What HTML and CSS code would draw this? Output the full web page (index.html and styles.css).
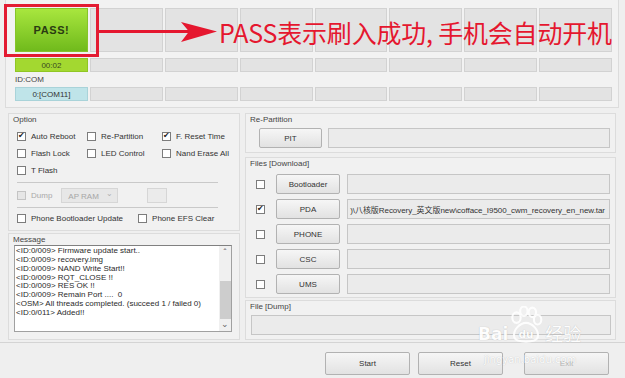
FILE: index.html
```html
<!DOCTYPE html>
<html lang="zh">
<head>
  <meta charset="UTF-8">
  <title>Odin3</title>
  <link rel="stylesheet" href="styles.css">
</head>
<body>
  <div class="window">

    <!-- 端口状态 -->
    <div class="top">
      <div class="slots big">
        <div class="slot pass">PASS!</div>
        <div class="slot"></div><div class="slot"></div><div class="slot"></div>
        <div class="slot"></div><div class="slot"></div><div class="slot"></div><div class="slot"></div>
      </div>
      <div class="slots small time-row">
        <div class="slot time">00:02</div>
        <div class="slot"></div><div class="slot"></div><div class="slot"></div>
        <div class="slot"></div><div class="slot"></div><div class="slot"></div><div class="slot"></div>
      </div>
      <div class="idcom">ID:COM</div>
      <div class="slots small">
        <div class="slot com">0:[COM11]</div>
        <div class="slot"></div><div class="slot"></div><div class="slot"></div>
        <div class="slot"></div><div class="slot"></div><div class="slot"></div><div class="slot"></div>
      </div>
    </div>

    <div class="main">
      <div class="col">
        <!-- Option -->
        <div class="group option">
          <div class="group-title">Option</div>
          <div class="opts">
            <label class="chk"><span class="cb on"></span>Auto Reboot</label>
            <label class="chk"><span class="cb"></span>Re-Partition</label>
            <label class="chk"><span class="cb on"></span>F. Reset Time</label>
            <label class="chk"><span class="cb"></span>Flash Lock</label>
            <label class="chk"><span class="cb"></span>LED Control</label>
            <label class="chk"><span class="cb"></span>Nand Erase All</label>
            <label class="chk"><span class="cb"></span>T Flash</label>
          </div>
          <div class="sep"></div>
          <div class="dump-row">
            <label class="chk off"><span class="cb"></span>Dump</label>
            <div class="select">AP RAM<span class="caret">&#8964;</span></div>
            <div class="mini-box"></div>
          </div>
          <div class="sep"></div>
          <div class="phone-row">
            <label class="chk"><span class="cb"></span>Phone Bootloader Update</label>
            <label class="chk efs"><span class="cb"></span>Phone EFS Clear</label>
          </div>
        </div>

        <!-- Message -->
        <div class="group message">
          <div class="group-title">Message</div>
          <div class="log">
            <div class="log-text">
              <div>&lt;ID:0/009&gt; Firmware update start..</div>
              <div>&lt;ID:0/009&gt; recovery.img</div>
              <div>&lt;ID:0/009&gt; NAND Write Start!!</div>
              <div>&lt;ID:0/009&gt; RQT_CLOSE !!</div>
              <div>&lt;ID:0/009&gt; RES OK !!</div>
              <div>&lt;ID:0/009&gt; Remain Port ....&nbsp; 0</div>
              <div>&lt;OSM&gt; All threads completed. (succeed 1 / failed 0)</div>
              <div>&lt;ID:0/011&gt; Added!!</div>
            </div>
            <div class="scrollbar">
              <span class="arrow">&#710;</span>
              <span class="thumb"></span>
              <span class="arrow down">&#8964;</span>
            </div>
          </div>
        </div>
      </div>

      <div class="col">
        <!-- Re-Partition -->
        <div class="group repart">
          <div class="group-title">Re-Partition</div>
          <div class="pit-row">
            <button class="btn pit">PIT</button>
            <div class="field"></div>
          </div>
        </div>

        <!-- Files -->
        <div class="group files">
          <div class="group-title">Files [Download]</div>
          <div class="file-rows">
            <div class="file-row"><span class="cb"></span><button class="btn file-btn">Bootloader</button><div class="field"></div></div>
            <div class="file-row"><span class="cb on"></span><button class="btn file-btn">PDA</button><div class="field path"><span>)\八核版Recovery_英文版new\cofface_I9500_cwm_recovery_en_new.tar</span></div></div>
            <div class="file-row"><span class="cb"></span><button class="btn file-btn">PHONE</button><div class="field"></div></div>
            <div class="file-row"><span class="cb"></span><button class="btn file-btn">CSC</button><div class="field"></div></div>
            <div class="file-row"><span class="cb"></span><button class="btn file-btn">UMS</button><div class="field"></div></div>
          </div>
        </div>

        <!-- Dump -->
        <div class="group dump">
          <div class="group-title">File [Dump]</div>
          <div class="field dump-field"></div>
        </div>
      </div>
    </div>

    <div class="footer">
      <button class="btn action">Start</button>
      <button class="btn action">Reset</button>
      <button class="btn action exit">Exit</button>
    </div>

    <!-- 标注 -->
    <div class="mark-box"></div>
    <svg class="mark-arrow" width="120" height="30" viewBox="0 0 120 30">
      <rect x="0" y="13" width="92" height="3" fill="#e5172f"/>
      <polygon points="82,5 118,14.5 82,25 90,14.5" fill="#e5172f"/>
    </svg>
    <div class="mark-text">PASS表示刷入成功, 手机会自动开机</div>

    <!-- 水印 -->
    <div class="watermark">
      <div class="wm-logo">
        <span class="wm-bai">Bai</span>
        <svg class="wm-paw" width="36" height="38" viewBox="0 0 34 36">
          <g fill="none" stroke="#ffffff" stroke-width="2">
            <ellipse cx="8" cy="11" rx="4" ry="5"/>
            <ellipse cx="15" cy="5" rx="3.5" ry="4.5"/>
            <ellipse cx="23" cy="6" rx="3.5" ry="4.5"/>
            <ellipse cx="28" cy="13" rx="3.5" ry="4.5"/>
            <path d="M6 30 C4 22 12 16 17 16 C22 16 30 22 28 30 C26 35 8 35 6 30 Z"/>
          </g>
          <text x="17" y="30" text-anchor="middle" class="wm-du">du</text>
        </svg>
        <span class="wm-jy">经验</span>
      </div>
      <div class="wm-url">jingyan.baidu.com</div>
    </div>
  </div>
</body>
</html>
```

FILE: styles.css
```css
/* General */
body {
  margin: 0;
  background-color: #f0f0f0;
  font-family: 'Liberation Sans', Arial, sans-serif;
  font-size: 8px;
  color: #333;
}

.window {
  position: relative;
  width: 625px;
  height: 378px;
  overflow: hidden;
  background-color: #efefef;
}

/* Top slots */
.top {
  margin: 0 6px 0 5px;
  height: 108px;
  box-sizing: border-box;
  padding: 8px 0 0 9px;
  border: 1px solid #dcdcdc;
  border-top: 0;
  background-color: #f2f2f2;
}

.slots {
  display: grid;
  grid-template-columns: repeat(8, 1fr);
  column-gap: 2px;
  width: 597px;
}

.slots.big { height: 44px; }
.slots.small { height: 14px; }
.time-row { margin-top: 6px; }

.slot {
  box-sizing: border-box;
  background-color: #e3e3e3;
  border: 1px solid #d2d2d2;
  display: flex;
  align-items: center;
  justify-content: center;
}

.slot.pass {
  background: linear-gradient(#a8e63e, #70ba1c);
  border-color: #86c42a;
  font-size: 11px;
  font-weight: bold;
  letter-spacing: 0.6px;
  color: #2b3b12;
}

.slot.time {
  background-color: #a3d830;
  border-color: #90c624;
  color: #3a4a20;
}

.slot.com {
  background-color: #bfe4e9;
  border-color: #a9d3d9;
  color: #333;
}

.idcom {
  height: 15px;
  line-height: 15px;
  color: #444;
}

/* Main area */
.main {
  display: grid;
  grid-template-columns: 232px 371px;
  column-gap: 5px;
  padding: 5px 0 0 8px;
  height: 235px;
  box-sizing: border-box;
  border-bottom: 1px solid #d4d4d4;
}

.group {
  box-sizing: border-box;
  border: 1px solid #dcdcdc;
  background-color: #f1f1f1;
}

.group-title {
  height: 11px;
  line-height: 11px;
  padding-left: 4px;
  color: #444;
}

/* Option */
.option { height: 118px; }

.opts {
  display: grid;
  grid-template-columns: 70px 75px auto;
  grid-auto-rows: 17px;
  padding: 3px 0 0 8px;
}

.chk {
  display: flex;
  align-items: center;
  gap: 5px;
  color: #333;
  white-space: nowrap;
}

.cb {
  display: inline-block;
  position: relative;
  width: 9px;
  height: 9px;
  box-sizing: border-box;
  border: 1px solid #7c7c7c;
  background-color: #fff;
  flex: none;
}

.cb.on::after {
  content: '\2714';
  position: absolute;
  left: 0;
  top: -2px;
  font-family: 'DejaVu Sans', sans-serif;
  font-size: 8px;
  color: #222;
}

.chk.off { color: #a8a8a8; }
.chk.off .cb { border-color: #c4c4c4; background-color: #e6e6e6; }

.sep {
  margin: 3px 0 0 8px;
  width: 201px;
  border-top: 1px solid #c9c9c9;
}

.dump-row {
  display: flex;
  align-items: center;
  height: 24px;
  padding-left: 8px;
}

.dump-row + .sep { margin-top: 0; }

.select {
  position: relative;
  margin-left: 9px;
  width: 57px;
  height: 15px;
  line-height: 15px;
  box-sizing: border-box;
  padding-left: 6px;
  background-color: #e7e7e7;
  border: 1px solid #d6d6d6;
  color: #a6a6a6;
}

.caret {
  position: absolute;
  right: 4px;
  top: -3px;
  color: #b0b0b0;
}

.mini-box {
  margin-left: 29px;
  width: 20px;
  height: 15px;
  box-sizing: border-box;
  background-color: #ebebeb;
  border: 1px solid #d6d6d6;
}

.phone-row {
  display: flex;
  align-items: center;
  height: 20px;
  padding-left: 8px;
}

.chk.efs { margin-left: 15px; }

/* Message */
.message {
  margin-top: 2px;
  height: 107px;
}

.log {
  display: flex;
  margin-left: 5px;
  width: 218px;
  height: 87px;
  box-sizing: border-box;
  border: 1px solid #a0a0a0;
  border-top-color: #808080;
  background-color: #fff;
}

.log-text {
  flex: 1;
  padding: 1px 0 0 1px;
  line-height: 8.86px;
  color: #2a2a2a;
  white-space: nowrap;
  overflow: hidden;
}

.scrollbar {
  width: 12px;
  display: flex;
  flex-direction: column;
  align-items: center;
  background-color: #f0f0f0;
}

.arrow {
  height: 10px;
  line-height: 12px;
  font-size: 9px;
  color: #666;
}

.arrow.down {
  margin-top: auto;
  line-height: 6px;
}

.thumb {
  margin-top: 25px;
  width: 11px;
  height: 38px;
  background-color: #cdcdcd;
}

/* Right column */
.repart { height: 40px; }

.pit-row {
  display: flex;
  gap: 6px;
  margin: 3px 0 0 13px;
  height: 20px;
}

.btn {
  box-sizing: border-box;
  margin: 0;
  padding: 0;
  font-family: inherit;
  font-size: 8px;
  color: #333;
  background: linear-gradient(#f6f6f6, #e2e2e2);
  border: 1px solid #b2b2b2;
  border-radius: 2px;
}

.btn.pit { width: 63px; }

.field {
  flex: 1;
  box-sizing: border-box;
  margin-right: 5px;
  background-color: #ebebeb;
  border: 1px solid #c6c6c6;
}

.files {
  margin-top: 4px;
  height: 141px;
}

.file-rows {
  display: flex;
  flex-direction: column;
  gap: 5px;
  margin: 5px 0 0 10px;
}

.file-row {
  display: flex;
  align-items: center;
  height: 20px;
}

.file-btn {
  margin-left: 11px;
  width: 64px;
  height: 20px;
}

.file-row .field {
  margin-left: 7px;
  height: 20px;
}

.field.path {
  display: flex;
  align-items: center;
  justify-content: flex-end;
  overflow: hidden;
  white-space: nowrap;
  padding-right: 4px;
  font-size: 8px;
  letter-spacing: -0.05px;
  color: #333;
  font-family: 'Liberation Sans', 'Noto Sans CJK SC', sans-serif;
}

.dump {
  margin-top: 2px;
  height: 40px;
}

.dump-field {
  margin: 3px 4px 0 5px;
  height: 20px;
}

/* Footer */
.footer {
  display: flex;
  padding: 9px 0 0 325px;
}

.btn.action {
  width: 85px;
  height: 23px;
  margin-right: 8px;
}

.btn.action.exit {
  margin-left: 13px;
  color: #b5b5b5;
}

/* Annotation */
.mark-box {
  position: absolute;
  left: 4px;
  top: 4px;
  width: 95px;
  height: 53px;
  box-sizing: border-box;
  border: 3px solid #e31b32;
}

.mark-arrow {
  position: absolute;
  left: 99px;
  top: 17px;
}

.mark-text {
  position: absolute;
  left: 219px;
  top: 16px;
  font-family: 'Noto Sans CJK SC', sans-serif;
  font-size: 25px;
  line-height: 32px;
  letter-spacing: -0.2px;
  color: #e5172f;
  white-space: nowrap;
}

/* Watermark */
.watermark {
  position: absolute;
  left: 478px;
  top: 306px;
  color: #fff;
  opacity: 0.9;
  text-shadow: 0 0 1px rgba(0, 0, 0, 0.25);
}

.wm-logo {
  display: flex;
  align-items: flex-end;
}

.wm-bai {
  font-family: 'DejaVu Sans', sans-serif;
  font-weight: bold;
  font-size: 17px;
  line-height: 20px;
}

.wm-du {
  font-family: 'DejaVu Sans', sans-serif;
  font-weight: bold;
  font-size: 10px;
  fill: #ffffff;
}

.wm-jy {
  margin-left: 1px;
  font-family: 'Noto Sans CJK SC', sans-serif;
  font-size: 18px;
  line-height: 22px;
}

.wm-url {
  margin: 10px 0 0 6px;
  font-family: 'DejaVu Sans', sans-serif;
  font-size: 10px;
}
```
